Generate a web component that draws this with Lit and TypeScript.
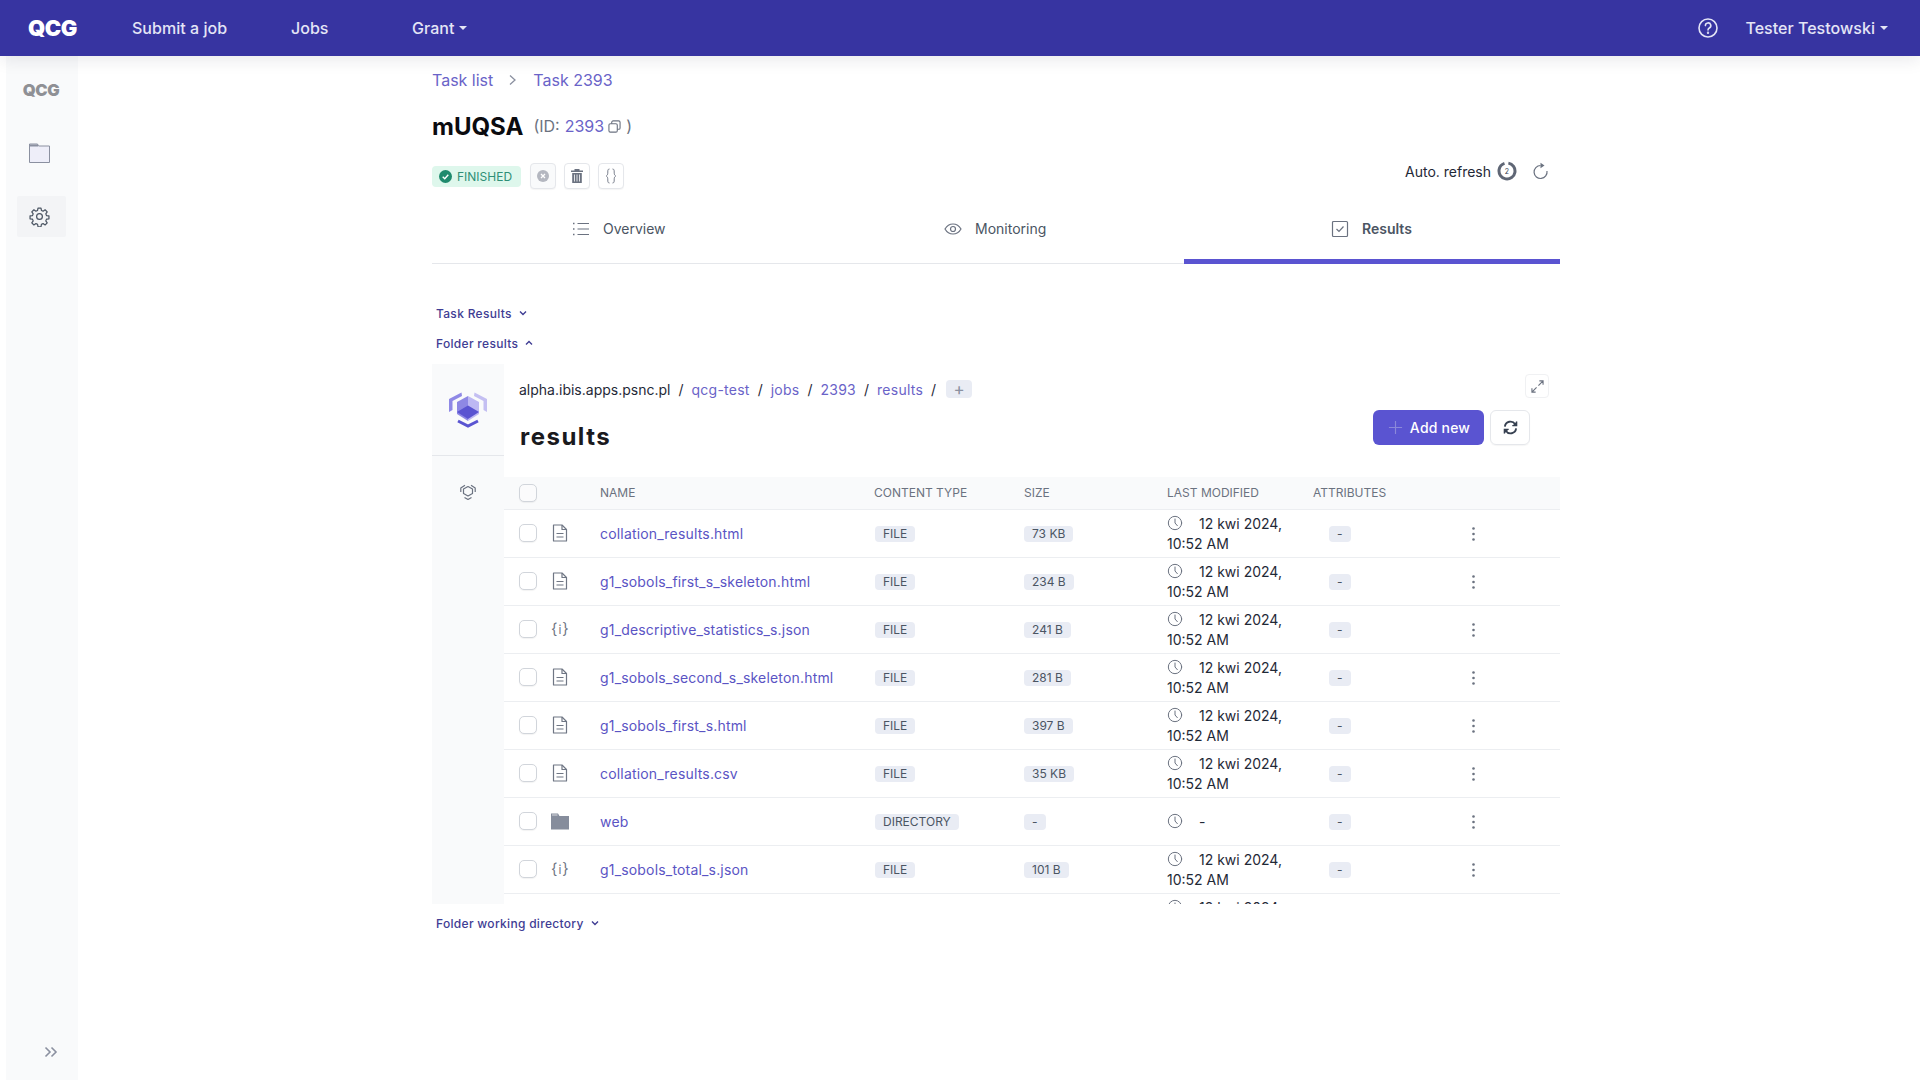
import { LitElement, html, css } from "lit";
import { customElement } from "lit/decorators.js";

const FILES = [
  { name: "collation_results.html", icon: "doc", type: "FILE", size: "73 KB", date: true },
  { name: "g1_sobols_first_s_skeleton.html", icon: "doc", type: "FILE", size: "234 B", date: true },
  { name: "g1_descriptive_statistics_s.json", icon: "json", type: "FILE", size: "241 B", date: true },
  { name: "g1_sobols_second_s_skeleton.html", icon: "doc", type: "FILE", size: "281 B", date: true },
  { name: "g1_sobols_first_s.html", icon: "doc", type: "FILE", size: "397 B", date: true },
  { name: "collation_results.csv", icon: "doc", type: "FILE", size: "35 KB", date: true },
  { name: "web", icon: "folder", type: "DIRECTORY", size: "-", date: false },
  { name: "g1_sobols_total_s.json", icon: "json", type: "FILE", size: "101 B", date: true },
  { name: "g1_sobols_second_s.html", icon: "doc", type: "FILE", size: "124 B", date: true },
];

const clock = html`<svg class="clock" viewBox="0 0 24 24" fill="none" stroke="currentColor" stroke-width="1.5" stroke-linecap="round"><circle cx="12" cy="12" r="10"/><path d="M12 6V12l3.500 4"/></svg>`;

const fileIcon = (k: string) => {
  if (k === "doc") return html`<svg class="ficon" viewBox="0 0 16 18" fill="none" stroke="currentColor" stroke-width="1.200" stroke-linejoin="round"><path d="M1.500 1h8.500l4.500 4.500V17h-13z"/><path d="M10 1v4.500h4.500M4.500 9.500h7M4.500 13h7"/></svg>`;
  if (k === "folder") return html`<svg class="ficon folder" viewBox="0 0 18 18" fill="currentColor"><path d="M0 1.500h7l1.500 2.500H18v13.500H0z"/><path d="M1 3h5.500" stroke="#fff" stroke-width=".7"/></svg>`;
  return html`<span class="jsonic">{<i>i</i>}</span>`;
};

const chevDown = html`<svg viewBox="0 0 10 10" fill="none" stroke="currentColor" stroke-width="1.400"><path d="M2 3.500 5 6.500 8 3.500"/></svg>`;

@customElement("app-root")
export class AppRoot extends LitElement {
  static styles = css`
    :host { display: block; width: 1920px; height: 1080px; overflow: hidden; background: #fff; font-family: Inter, "Liberation Sans", sans-serif; color: #111827; font-size: 14px; }
    * { box-sizing: border-box; }
    a { color: inherit; text-decoration: none; }
    .nav { height: 56px; background: #3734a1; color: #e4e5f6; display: flex; align-items: center; padding-left: 28px; position: relative; z-index: 2; box-shadow: 0 4px 16px rgba(17, 24, 39, .09); font-size: 16px; font-weight: 500; letter-spacing: .03px; }
    .logo { font-weight: 900; letter-spacing: -.5px; line-height: 1; }
    .nav .logo { color: #fff; font-size: 22px; width: 104px; }
    .nav a { display: flex; align-items: center; }
    .m1 { width: 159px; } .m2 { width: 121px; }
    .caret { display: inline-block; margin-left: 5px; border: 4px solid transparent; border-top-color: currentColor; border-bottom: 0; }
    .spacer { flex: 1; }
    .help { width: 20px; height: 20px; margin-right: 27px; }
    .user { margin-right: 32px; }
    .body { display: flex; height: 1024px; }
    .side { width: 72px; margin-left: 6px; background: #f9fafb; display: flex; flex-direction: column; align-items: center; padding-top: 24px; position: relative; }
    .side .logo { color: #8f9095; font-size: 16.500px; height: 20px; display: flex; align-items: center; margin-left: -2px; }
    .side-folder { width: 21px; height: 20px; margin: 43px 0 0 -6px; }
    .gear { width: 49px; height: 41px; margin: 33px 0 0 -2px; background: #f3f4f6; display: flex; align-items: center; justify-content: center; color: #4b5563; border-radius: 2px; }
    .gear svg { width: 21px; height: 21px; margin-left: -4px; }
    .expand { position: absolute; left: 38px; bottom: 22px; width: 14px; height: 12px; color: #8b90a0; }
    .main { width: 1128px; margin-left: 354px; display: flex; flex-direction: column; }
    .crumbs { height: 48px; display: flex; align-items: center; font-size: 16px; color: #6a63c8; }
    .crumbs svg { width: 9px; height: 12px; margin: 0 16px 0 15px; color: #8b90a0; }
    .title { height: 44px; display: flex; align-items: center; }
    .title h1 { margin: 0; font-size: 24px; font-weight: 700; color: #0b0b0f; }
    .title .id { margin-left: 10px; font-size: 16px; color: #6b7280; display: flex; align-items: center; }
    .title .id a { color: #6a63c8; margin-left: 5px; }
    .copy { width: 13px; height: 13px; margin: 0 5px 0 4px; color: #6b7280; }
    .status { height: 52px; display: flex; align-items: center; padding-top: 4px; }
    .badge-ok { height: 21px; width: 89px; border-radius: 4px; background: #def7ec; color: #2f8f76; font-size: 12px; display: flex; align-items: center; padding-left: 7px; gap: 5px; }
    .badge-ok svg { width: 13px; height: 13px; }
    .btn { width: 26px; height: 26px; border: 1px solid #e5e7eb; border-radius: 4px; display: flex; align-items: center; justify-content: center; color: #6b7280; margin-left: 8px; background: #fff; box-shadow: 0 1px 1px rgba(0,0,0,.04); }
    .btn svg { width: 16px; height: 16px; }
    .btn.off { background: #f9fafb; color: #b4b7c0; margin-left: 9px; }
    .btn.off svg { width: 14px; height: 14px; }
    .refresh { margin-left: auto; display: flex; align-items: center; margin-right: 10px; margin-top: -10px; font-size: 14px; color: #1f2937; }
    .refresh .ring { width: 20px; height: 20px; margin-left: 6px; }
    .refresh .re { width: 18px; height: 18px; margin-left: 15px; color: #6b7280; }
    .tabs { display: flex; height: 64px; border-bottom: 1px solid #e5e7eb; }
    .tab { flex: 0 0 376px; display: flex; align-items: center; color: #4b5563; font-size: 14px; height: 64px; padding-bottom: 2px; gap: 13px; border-bottom: 5px solid transparent; }
    .tab svg { width: 18px; height: 18px; color: #6b7280; }
    .tab.t1 { padding-left: 140px; } .tab.t2 { padding-left: 136px; }
    .tab.t3 { padding-left: 147px; font-weight: 600; border-bottom-color: #5a54d1; }
    .acc { display: flex; align-items: center; height: 30px; padding-left: 4px; font-size: 12px; font-weight: 500; color: #3f3d94; letter-spacing: .3px; gap: 6px; }
    .acc svg { width: 10px; height: 10px; }
    .acc.first { margin-top: 34px; }
    .acc.last { margin-top: 4px; }
    .panel { height: 540px; margin-top: 6px; display: flex; overflow: hidden; }
    .rail { width: 72px; background: #f9fafb; display: flex; flex-direction: column; align-items: center; flex: none; }
    .rail .top { height: 92px; width: 100%; border-bottom: 1px solid #e5e7eb; display: flex; align-items: center; justify-content: center; }
    .rail .top svg { width: 40px; height: 40px; margin-bottom: 4px; }
    .rail .pin { width: 18px; height: 18px; margin-top: 27px; color: #6b7280; }
    .content { flex: 1; min-width: 0; display: flex; flex-direction: column; }
    .head { height: 113px; padding-left: 15px; position: relative; flex: none; }
    .path { height: 22px; margin-top: 14px; display: flex; align-items: center; font-size: 14px; color: #1f2937; }
    .path a { color: #6a63c8; letter-spacing: .25px; }
    .path .s { margin: 0 8px; }
    .path .plus { width: 26px; height: 18px; background: #e9ecf4; color: #8b90a0; border-radius: 4px; display: flex; align-items: center; justify-content: center; font-size: 17px; margin-left: 2px; }
    .head h2 { margin: 22px 0 0 1px; font-size: 24px; line-height: 30px; font-weight: 700; letter-spacing: 1.500px; color: #1a1a1e; }
    .fs { position: absolute; top: 10px; right: 11px; width: 24px; height: 24px; border: 1px solid #f0f1f3; border-radius: 4px; display: flex; align-items: center; justify-content: center; color: #6b7280; }
    .fs svg { width: 13px; height: 13px; }
    .actions { position: absolute; top: 46px; right: 30px; display: flex; gap: 6px; }
    .add { width: 111px; height: 35px; background: #5a54d1; color: #fff; border-radius: 6px; display: flex; align-items: center; justify-content: center; font-weight: 500; font-size: 14px; gap: 7px; letter-spacing: .2px; padding-left: 1px; }
    .add svg { width: 15px; height: 15px; color: #8b88da; }
    .sync { width: 40px; height: 35px; border: 1px solid #e5e7eb; border-radius: 6px; display: flex; align-items: center; justify-content: center; color: #374151; box-shadow: 0 1px 1px rgba(0,0,0,.04); }
    .sync svg { width: 15px; height: 15px; }
    .table { flex: 1; min-height: 0; overflow: hidden; }
    .row { display: grid; grid-template-columns: 96px 274px 150px 143px 146px 160px 1fr; align-items: center; height: 48px; border-bottom: 1px solid #eceef1; }
    .row.h { height: 33px; background: #f9fafb; font-size: 12px; color: #6b7280; }
    .row.h > div:not(.sel) { padding-bottom: 2px; }
    .row > .name { padding-left: 0; }
    .sel { display: flex; align-items: center; padding-left: 15px; gap: 15px; }
    .cb { width: 18px; height: 18px; border: 1px solid #d1d5db; border-radius: 5px; background: #fff; box-shadow: 0 1px 1px rgba(0,0,0,.05); flex: none; margin-top: -1px; }
    .h .cb { background: #fbfbfc; margin-top: 0; }
    .ficon { width: 16px; height: 18px; color: #6f7684; flex: none; margin-top: -1px; }
    .ficon.folder { color: #868d9c; width: 18px; margin-left: -1px; }
    .jsonic { width: 16px; text-align: center; color: #6f7684; font-size: 15px; line-height: 18px; flex: none; white-space: nowrap; margin-left: -1px; }
    .jsonic i { font-style: normal; font-size: 12px; margin: 0 1px; }
    .name { color: #5a54c4; letter-spacing: .18px; }
    .tagcell { display: flex; }
    .tagcell.ct { padding-left: 1px; }
    .tag { display: block; height: 16px; line-height: 16px; padding: 0 8px; background: #e9ecf4; color: #4b5563; border-radius: 4px; font-size: 12px; }
    .date { line-height: 20px; width: 125px; color: #1f2937; }
    .clock { width: 16px; height: 16px; color: #6b7280; margin-right: 16px; vertical-align: -2px; }
    .attr { padding-left: 16px; }
    .dots { display: block; width: 3px; height: 14px; color: #6b7280; margin-left: -1px; }
  `;

  render() {
    return html`
      <div class="nav">
        <div class="logo">QCG</div>
        <a class="m1">Submit a job</a>
        <a class="m2">Jobs</a>
        <a>Grant<span class="caret"></span></a>
        <span class="spacer"></span>
        <svg class="help" viewBox="0 0 20 20" fill="none" stroke="currentColor" stroke-width="1.600" stroke-linecap="round"><circle cx="10" cy="10" r="9"/><path d="M7.400 7.600a2.700 2.700 0 1 1 3.900 2.400c-.9.500-1.300 1-1.300 2"/><circle cx="10" cy="14.800" r=".4"/></svg>
        <a class="user">Tester Testowski<span class="caret"></span></a>
      </div>
      <div class="body">
        <div class="side">
          <div class="logo">QCG</div>
          <svg class="side-folder" viewBox="0 0 21 20"><path d="M.5 1h8l1 2h11V19.500H.5z" fill="#eeeef9" stroke="#8b90a0" stroke-width="1"/><path d="M1 2.500h8" stroke="#8b90a0" stroke-width="2"/></svg>
          <div class="gear"><svg viewBox="0 0 24 24" fill="none" stroke="currentColor" stroke-width="1.400" stroke-linejoin="round"><path d="M10.300 2.300h3.400l.5 2.800 1.900.8 2.300-1.600 2.400 2.400-1.600 2.300.8 1.900 2.800.5v3.200l-2.800.5-.8 1.900 1.600 2.300-2.400 2.400-2.300-1.600-1.900.8-.5 2.800h-3.400l-.5-2.800-1.900-.8-2.300 1.600-2.400-2.400 1.600-2.300-.8-1.900-2.800-.5v-3.200l2.800-.5.8-1.900-1.600-2.300 2.400-2.400 2.300 1.600 1.900-.8z"/><circle cx="12" cy="12" r="3.300"/></svg></div>
          <svg class="expand" viewBox="0 0 14 12" fill="none" stroke="currentColor" stroke-width="1.600"><path d="M1.500 1.500 6 6l-4.500 4.500M7.500 1.500 12 6l-4.500 4.500"/></svg>
        </div>
        <div class="main">
          <div class="crumbs"><a>Task list</a><svg viewBox="0 0 9 12" fill="none" stroke="currentColor" stroke-width="1.300"><path d="M2 1.500 7 6l-5 4.500"/></svg><a>Task 2393</a></div>
          <div class="title"><h1>mUQSA</h1><span class="id">(ID: <a>2393</a><svg class="copy" viewBox="0 0 14 14" fill="none" stroke="currentColor" stroke-width="1.200"><rect x="1" y="4" width="9" height="9" rx="1.500"/><path d="M4 4V2.500A1.500 1.500 0 0 1 5.500 1H11.500A1.500 1.500 0 0 1 13 2.500V8.500A1.500 1.500 0 0 1 11.500 10H10"/></svg>)</span></div>
          <div class="status">
            <div class="badge-ok"><svg viewBox="0 0 14 14"><circle cx="7" cy="7" r="7" fill="#1f8a6d"/><path d="M4 7.200 6.200 9.300 10 5.200" fill="none" stroke="#fff" stroke-width="1.500"/></svg>FINISHED</div>
            <div class="btn off"><svg viewBox="0 0 14 14"><circle cx="7" cy="7" r="6" fill="currentColor"/><path d="M5 5l4 4M9 5l-4 4" stroke="#fff" stroke-width="1.300"/></svg></div>
            <div class="btn"><svg viewBox="0 0 16 16" fill="currentColor"><path d="M2 2.500h12V4H2zM5.500 1h5v1.500h-5zM3.200 5h9.600v10H3.200z"/><path d="M5.500 6.500v7M8 6.500v7M10.500 6.500v7" stroke="#fff" stroke-width=".8"/></svg></div>
            <div class="btn"><svg viewBox="0 0 16 16" fill="none" stroke="currentColor" stroke-width=".9"><path d="M6.500 1C4.800 1 4.800 2.300 4.800 4s0 3-1.500 4c1.500 1 1.500 2.300 1.500 4s0 3 1.700 3M9.500 1c1.700 0 1.700 1.300 1.700 3s0 3 1.500 4c-1.500 1-1.500 2.300-1.500 4s0 3-1.700 3"/></svg></div>
            <div class="refresh">Auto. refresh
              <svg class="ring" viewBox="0 0 20 20"><circle cx="10" cy="10" r="8" fill="none" stroke="#5f6675" stroke-width="3" stroke-dasharray="46 4.300" transform="rotate(-80 10 10)"/><text x="10" y="12.500" text-anchor="middle" font-size="7" fill="#374151" font-family="Inter">2</text></svg>
              <svg class="re" viewBox="0 0 18 18" fill="none" stroke="currentColor" stroke-width="1.200"><path d="M8.500 3.500A6.500 6.500 0 1 0 15 9"/><path d="M8.500 .8l4 2.700-4 2.700z" fill="currentColor" stroke="none"/></svg>
            </div>
          </div>
          <div class="tabs">
            <div class="tab t1"><svg viewBox="0 0 18 18" fill="none" stroke="currentColor" stroke-width="1.200"><path d="M5.500 3.500H17M5.500 9H17M5.500 14.500H17"/><path d="M1 3.500h1.500M1 9h1.500M1 14.500h1.500" stroke-width="1.600"/></svg>Overview</div>
            <div class="tab t2"><svg viewBox="0 0 18 18" fill="none" stroke="currentColor" stroke-width="1.200"><path d="M1 9c2-3.500 4.700-5 8-5s6 1.500 8 5c-2 3.500-4.700 5-8 5s-6-1.500-8-5z"/><circle cx="9" cy="9" r="2.500"/></svg>Monitoring</div>
            <div class="tab t3"><svg viewBox="0 0 18 18" fill="none" stroke="currentColor" stroke-width="1.200"><rect x="1.500" y="1.500" width="15" height="15" rx="1"/><path d="M5.500 9l2.500 2.500 4.500-5"/></svg>Results</div>
          </div>
          <div class="acc first">Task Results ${chevDown}</div>
          <div class="acc">Folder results <svg viewBox="0 0 10 10" fill="none" stroke="currentColor" stroke-width="1.400"><path d="M2 6.500 5 3.500 8 6.500"/></svg></div>
          <div class="panel">
            <div class="rail">
              <div class="top"><svg viewBox="0 0 40 40">
                <path d="M1 24l3.500-2v-9L14 8l-.5-3.500L1 11z" fill="#8f89e6"/>
                <path d="M39 24l-3.500-2v-9L26 8l.5-3.500L39 11z" fill="#c4bff2"/>
                <path d="M20 8 9 14v12l11 7z" fill="#8e88e4"/>
                <path d="M20 8l11 6v12l-11 7z" fill="#bdb8f3"/>
                <path d="M9 24l11-6.500L31 24l-11 7z" fill="#5a54d1"/>
                <path d="M10 33l10 5 10-5" fill="none" stroke="#5a54d1" stroke-width="3"/>
              </svg></div>
              <svg class="pin" viewBox="0 0 18 18" fill="none" stroke="currentColor" stroke-width="1.200" stroke-linejoin="round"><path d="M9 3.500l4.500 2.500v4.500L9 13l-4.500-2.500V6zM1.800 9V5L6 2.200M16.200 9V5L12 2.200M5.500 14.500 9 16.500l3.500-2"/></svg>
            </div>
            <div class="content">
              <div class="head">
                <div class="path">alpha.ibis.apps.psnc.pl<span class="s">/</span><a>qcg-test</a><span class="s">/</span><a>jobs</a><span class="s">/</span><a>2393</a><span class="s">/</span><a>results</a><span class="s">/</span><span class="plus">+</span></div>
                <h2>results</h2>
                <div class="fs"><svg viewBox="0 0 14 14" fill="none" stroke="currentColor" stroke-width="1.200"><path d="M8 6l5-5M9 1h4v4M6 8l-5 5M5 13H1V9"/></svg></div>
                <div class="actions">
                  <div class="add"><svg viewBox="0 0 16 16" fill="none" stroke="currentColor" stroke-width="1.200"><path d="M8 1v14M1 8h14"/></svg>Add new</div>
                  <div class="sync"><svg viewBox="0 0 16 16" fill="none" stroke="currentColor" stroke-width="2"><path d="M2 7a6 6 0 0 1 11-2.500M14 9a6 6 0 0 1-11 2.500"/><path d="M14.500 1.500V6H10M1.500 14.500V10H6" stroke-width="1.500" fill="currentColor"/></svg></div>
                </div>
              </div>
              <div class="table">
                <div class="row h"><div class="sel"><span class="cb"></span></div><div>NAME</div><div>CONTENT TYPE</div><div>SIZE</div><div>LAST MODIFIED</div><div>ATTRIBUTES</div><div></div></div>
                ${FILES.map((f) => html`
                  <div class="row">
                    <div class="sel"><span class="cb"></span>${fileIcon(f.icon)}</div>
                    <div class="name">${f.name}</div>
                    <div class="tagcell ct"><span class="tag">${f.type}</span></div>
                    <div class="tagcell"><span class="tag">${f.size}</span></div>
                    <div class="date">${clock}${f.date ? "12 kwi 2024, 10:52 AM" : "-"}</div>
                    <div class="tagcell attr"><span class="tag">-</span></div>
                    <div><svg class="dots" viewBox="0 0 3 14" fill="currentColor"><circle cx="1.500" cy="1.500" r="1.300"/><circle cx="1.500" cy="7" r="1.300"/><circle cx="1.500" cy="12.500" r="1.300"/></svg></div>
                  </div>`)}
              </div>
            </div>
          </div>
          <div class="acc last">Folder working directory ${chevDown}</div>
        </div>
      </div>
    `;
  }
}
